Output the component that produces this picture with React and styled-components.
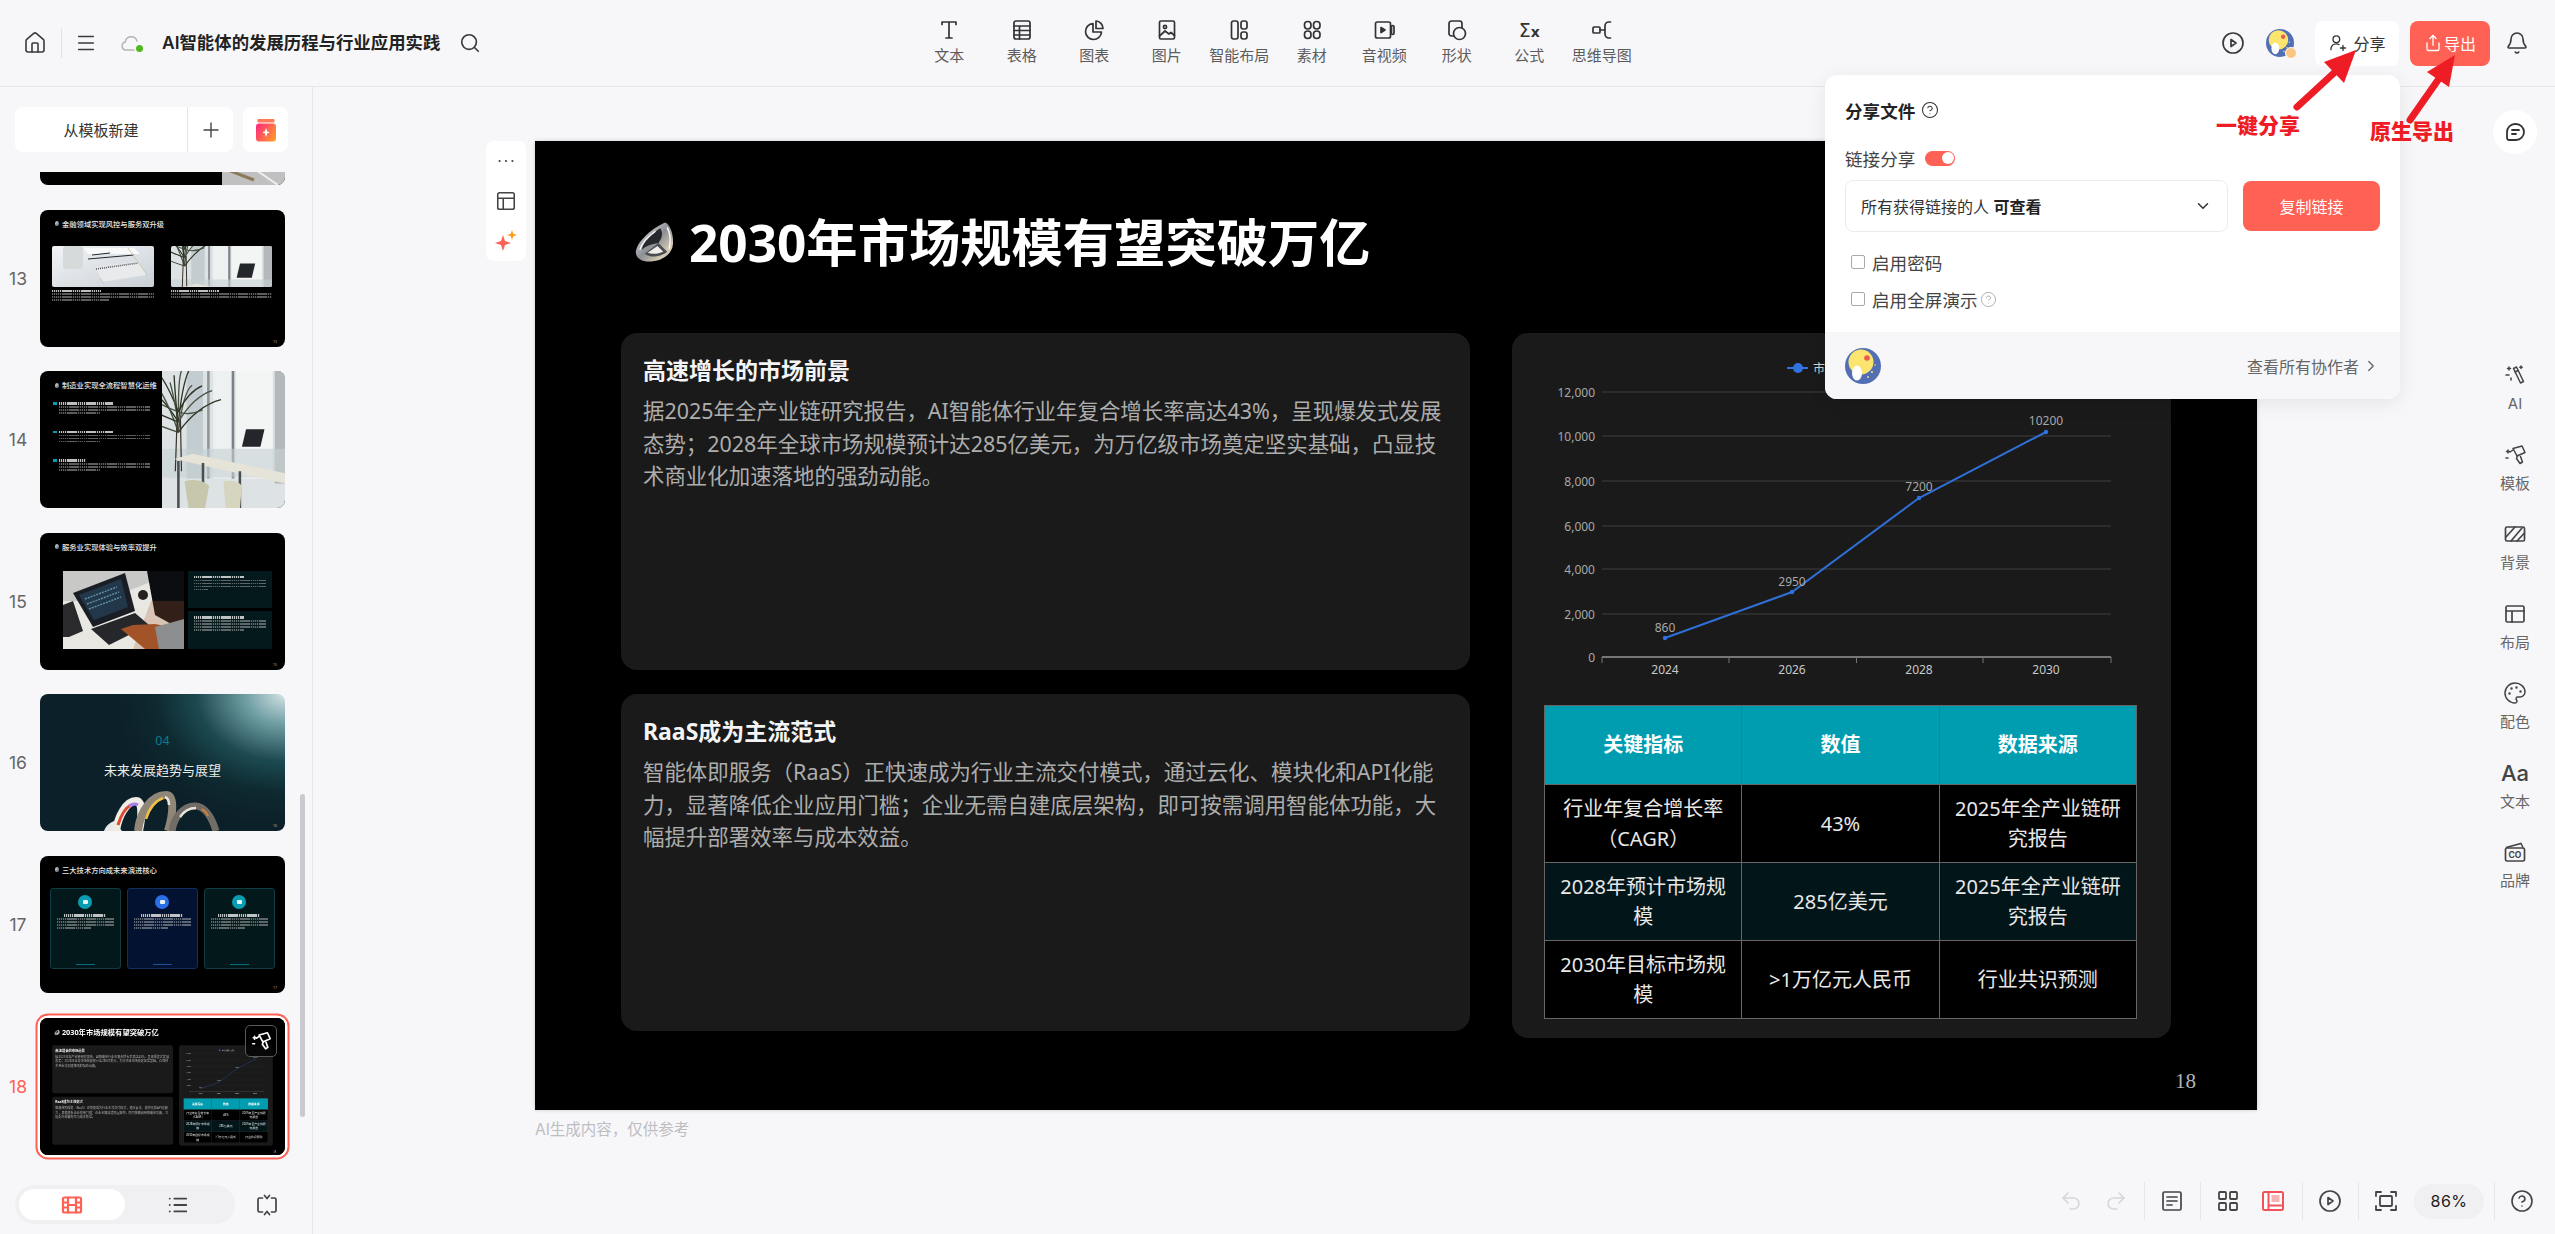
import React from 'react'
import styled, { createGlobalStyle } from 'styled-components'
import {
  Bell,
  ChevronDown,
  ChevronRight,
  CircleHelp,
  House,
  LayoutGrid,
  List,
  Menu,
  Palette,
  Plus,
  Redo2,
  Search,
  Share,
  Undo2,
} from 'lucide-react'

const CORAL = '#ff6154'
const PAGE = '#f7f7fa'
const UI_FONT = `Inter, "Noto Sans CJK SC", sans-serif`
const SLIDE_FONT = `"Noto Sans", "Noto Sans CJK SC", sans-serif`

const GlobalStyle = createGlobalStyle`
  html, body {
    margin: 0;
    padding: 0;
    background: ${PAGE};
    font-family: ${UI_FONT};
    color: #222;
  }
  * { box-sizing: border-box; }
`

const Root = styled.div`
  position: relative;
  width: 2555px;
  height: 1234px;
  overflow: hidden;
  display: flex;
  flex-direction: column;
  background: ${PAGE};
`

/* ---------- icons ---------- */

const IconSvg = styled.svg`
  flex: none;
  display: block;
  fill: none;
  stroke: currentColor;
  stroke-width: ${({ $w }) => $w || 1.7};
  stroke-linecap: round;
  stroke-linejoin: round;
  color: ${({ $color }) => $color || 'inherit'};
`

const Icon = ({ size = 24, w, color, children }) => (
  <IconSvg viewBox="0 0 24 24" width={size} height={size} $w={w} $color={color}>
    {children}
  </IconSvg>
)

const PlayIcon = ({ size = 24 }) => (
  <Icon size={size}>
    <circle cx="12" cy="12" r="10" />
    <path d="M10 8.500l5 3.500-5 3.500z" />
  </Icon>
)

const Avatar = ({ size = 28 }) => (
  <svg viewBox="0 0 36 36" width={size} height={size} style={{ display: 'block', flex: 'none' }}>
    <circle cx="18" cy="18" r="18" fill="#536fb4" />
    <circle cx="16" cy="14" r="12.5" fill="#fbe56f" />
    <circle cx="22" cy="10" r="2.8" fill="#ea5a4e" />
    <ellipse cx="12" cy="25" rx="5" ry="7.5" fill="#fff" />
    <circle cx="27" cy="24" r="1" fill="#fbe56f" />
    <circle cx="23" cy="29" r="0.9" fill="#fbe56f" />
    <circle cx="30" cy="17" r="0.8" fill="#fbe56f" />
  </svg>
)

const RollerIcon = ({ size = 24, w }) => (
  <Icon size={size} w={w}>
    <path d="M10 5.500l9-2.500 3 6.500-8 3.500z" />
    <path d="M14.500 12.500l-1 3 3.500 5 2.500-1.500-2-5.500" />
    <path d="M10 7l-3 2" />
    <path d="M5 7v3M3.500 8.500h3M3 15h2" />
  </Icon>
)

const GemIcon = () => (
  <svg viewBox="0 0 40 42" width="100%" height="100%" style={{ display: 'block' }}>
    <defs>
      <linearGradient id="gem" x1="0" y1="0" x2="1" y2="1">
        <stop offset="0" stopColor="#eef2f3" />
        <stop offset="0.5" stopColor="#8c8f94" />
        <stop offset="0.8" stopColor="#d9cdb4" />
        <stop offset="1" stopColor="#2f6aa0" />
      </linearGradient>
    </defs>
    <path d="M31 1C19 6 3 19 1 30c-1 7 5 11 13 11 12 0 24-6 25-18C39.500 13 36 3 31 1z" fill="url(#gem)" />
    <path d="M26 7C18 12 8 21 7 29c4-4 10-6 17-7 4-5 5-10 2-15z" fill="#26282c" />
    <path d="M10 33l14-11 9 9c-6 5-16 7-23 2z" fill="#4a4d52" />
    <path d="M33 6c3 6 4 14 2 22M5 29c2-7 9-14 16-19" stroke="#f8f8f8" strokeWidth="1.500" fill="none" />
    <path d="M13 32l10-7 6 6c-5 2-11 3-16 1z" fill="#f1efe8" />
  </svg>
)

/* ---------- top bar ---------- */

const TopBar = styled.header`
  flex: none;
  height: 87px;
  display: flex;
  align-items: center;
  border-bottom: 1px solid #e6e6eb;
`

const TopLeft = styled.div`
  flex: none;
  width: 913px;
  padding-left: 23px;
  display: flex;
  align-items: center;
  color: #3a3a3a;
`

const TopDivider = styled.span`
  width: 1px;
  height: 30px;
  background: #e2e2e6;
  margin: 0 13px 0 14px;
`

const CloudBox = styled.span`
  position: relative;
  margin: 0 19px 0 22px;
  color: #b5b5b5;
  &::after {
    content: '';
    position: absolute;
    right: 0;
    bottom: 3px;
    width: 7px;
    height: 7px;
    border-radius: 50%;
    background: #52b81f;
  }
`

const DocTitle = styled.h1`
  margin: 0 19px 0 0;
  font-size: 17.4px;
  line-height: 24px;
  font-weight: 600;
  color: #222;
  white-space: nowrap;
`

const ToolStrip = styled.nav`
  flex: none;
  display: flex;
  margin-top: -3px;
`

const ToolItem = styled.div`
  width: 72.5px;
  display: flex;
  flex-direction: column;
  align-items: center;
  gap: 4px;
  color: #333;
`

const ToolLabel = styled.span`
  font-size: 15px;
  line-height: 20px;
  color: #5c5c5c;
  white-space: nowrap;
`

const SigmaGlyph = styled.span`
  height: 24px;
  line-height: 24px;
  font-family: "DejaVu Sans", sans-serif;
  font-size: 19px;
  font-weight: 500;
  color: #333;
  small { font-size: 14px; font-weight: 700; }
`

const TopRight = styled.div`
  margin-left: auto;
  padding-right: 26px;
  display: flex;
  align-items: center;
  color: #3a3a3a;
`

const AvatarBadge = styled.span`
  position: relative;
  margin: 0 21px;
  &::after {
    content: '';
    position: absolute;
    right: -3px;
    bottom: -2px;
    width: 10px;
    height: 10px;
    border-radius: 50%;
    background: #fbc584;
    border: 1px solid #fff;
  }
`

const TopButton = styled.button`
  height: 45px;
  width: ${({ $wide }) => ($wide ? 84 : 80)}px;
  margin-right: ${({ $wide }) => ($wide ? 11 : 15)}px;
  border: none;
  border-radius: 8px;
  display: flex;
  align-items: center;
  justify-content: center;
  gap: ${({ $primary }) => ($primary ? 2 : 5)}px;
  font-family: inherit;
  font-size: 16px;
  background: ${({ $primary }) => ($primary ? CORAL : '#fff')};
  color: ${({ $primary }) => ($primary ? '#fff' : '#333')};
`

const topTools = [
  ['文本', <Icon key="t"><path d="M5 6.500V4h14v2.500M12 4v16M9 20h6" /></Icon>],
  ['表格', <Icon key="t"><rect x="4" y="3" width="16" height="18" rx="2" /><path d="M4 8h16M4 12.500h16M4 17h16M9.500 8v13" /></Icon>],
  ['图表', <Icon key="t"><path d="M11 5.500a8 8 0 1 0 8.500 8.500H11z" /><path d="M14 3v7.500h7A7.500 7.500 0 0 0 14 3z" /></Icon>],
  ['图片', <Icon key="t"><rect x="4.500" y="3" width="15" height="18" rx="1.500" /><circle cx="10" cy="9" r="1.600" /><path d="M4.500 18l5.500-5 4 3 2-1.500 3.500 3" /></Icon>],
  ['智能布局', <Icon key="t"><rect x="4.500" y="3" width="6.500" height="18" rx="2.200" /><rect x="14" y="3" width="6" height="8" rx="2.200" /><rect x="14" y="14" width="6" height="7" rx="2.200" /></Icon>],
  ['素材', <Icon key="t"><rect x="4.500" y="3.500" width="6.500" height="7.500" rx="3.200" /><rect x="13.500" y="3.500" width="6.500" height="7.500" rx="3.200" /><rect x="4.500" y="13" width="6.500" height="7.500" rx="3.200" /><rect x="13.500" y="13" width="6.500" height="7.500" rx="3.200" /></Icon>],
  ['音视频', <Icon key="t"><rect x="3.500" y="4" width="15" height="16" rx="1.800" /><path d="M9 9.500l4 2.500-4 2.500z" fill="currentColor" /><rect x="19.500" y="7.500" width="2.500" height="9" rx="1.200" /></Icon>],
  ['形状', <Icon key="t"><rect x="4" y="3" width="13" height="15" rx="2.500" /><circle cx="14.500" cy="15.500" r="6" fill={PAGE} /></Icon>],
  ['公式', <SigmaGlyph key="t">Σ<small>x</small></SigmaGlyph>],
  ['思维导图', <Icon key="t"><rect x="3" y="9" width="7" height="6" rx="1" /><path d="M10 12h5M20.500 4H19a4 4 0 0 0-4 4v8a4 4 0 0 0 4 4h1.500" /></Icon>],
]

const Header = () => (
  <TopBar>
    <TopLeft>
      <House size={24} strokeWidth={1.6} />
      <TopDivider />
      <Menu size={22} strokeWidth={1.6} />
      <CloudBox>
        <Icon size={24} w={1.5}>
          <path d="M15 19H7a4 4 0 0 1-.7-7.900A6 6 0 0 1 18 10" />
        </Icon>
      </CloudBox>
      <DocTitle>AI智能体的发展历程与行业应用实践</DocTitle>
      <Search size={22} strokeWidth={1.8} />
    </TopLeft>
    <ToolStrip>
      {topTools.map(([label, icon]) => (
        <ToolItem key={label}>
          {icon}
          <ToolLabel>{label}</ToolLabel>
        </ToolItem>
      ))}
    </ToolStrip>
    <TopRight>
      <PlayIcon />
      <AvatarBadge><Avatar /></AvatarBadge>
      <TopButton $wide>
        <Icon size={20} w={1.6}>
          <circle cx="10" cy="7.500" r="4" />
          <path d="M3.500 20c0-4.500 3-7 6.500-7 1.200 0 2.300.3 3.200.8M18 15v6M15 18h6" />
        </Icon>
        分享
      </TopButton>
      <TopButton $primary>
        <Share size={18} strokeWidth={1.8} />
        导出
      </TopButton>
      <Bell size={24} strokeWidth={1.6} />
    </TopRight>
  </TopBar>
)

/* ---------- sidebar ---------- */

const Body = styled.div`
  flex: 1;
  min-height: 0;
  display: flex;
`

const Sidebar = styled.aside`
  flex: none;
  width: 313px;
  border-right: 1px solid #e6e6eb;
  display: flex;
  flex-direction: column;
`

const NewRow = styled.div`
  flex: none;
  display: flex;
  gap: 10px;
  padding: 20px 0 20px 15px;
`

const NewButton = styled.div`
  width: 218px;
  height: 45px;
  background: #fff;
  border-radius: 8px;
  display: grid;
  grid-template-columns: 172px 1px 1fr;
  align-items: center;
  justify-items: center;
  font-size: 15px;
  color: #333;
`

const NewSplit = styled.span`
  width: 1px;
  height: 45px;
  background: #e4e4e8;
`

const JarButton = styled.div`
  width: 45px;
  height: 45px;
  background: #fff;
  border-radius: 8px;
  display: flex;
  align-items: center;
  justify-content: center;
`

const ThumbViewport = styled.div`
  position: relative;
  flex: 1;
  min-height: 0;
  overflow: hidden;
`

const ThumbList = styled.div`
  margin-top: -124px;
  display: flex;
  flex-direction: column;
  gap: 24.6px;
`

const ThumbRow = styled.div`
  display: flex;
  align-items: center;
`

const ThumbNo = styled.span`
  flex: none;
  width: 36px;
  margin-right: 4px;
  text-align: center;
  font-size: 17.5px;
  color: ${({ $active }) => ($active ? CORAL : '#666')};
`

const ThumbFrame = styled.div`
  flex: none;
  position: relative;
  width: 245px;
  height: 137px;
  border-radius: 8px;
  box-shadow: ${({ $active }) => ($active ? `0 0 0 2.5px #fff, 0 0 0 4.5px ${CORAL}` : 'none')};
`

const ThumbCard = styled.div`
  position: relative;
  width: 100%;
  height: 100%;
  overflow: hidden;
  border-radius: 8px;
  background: ${({ $bg }) => $bg || '#000'};
  color: #fff;
  font-family: ${SLIDE_FONT};
`

const ThumbPage = styled.span`
  position: absolute;
  right: 8px;
  bottom: 3px;
  font-size: 3.5px;
  color: #aaa;
`

const ThumbHead = styled.div`
  display: flex;
  align-items: center;
  gap: 3px;
  height: 10px;
  margin: ${({ $m }) => $m || '9px 0 0 15px'};
  font-size: 7.3px;
  line-height: 10px;
  font-weight: 500;
  white-space: nowrap;
  color: #e8e8e8;
  &::before {
    content: '';
    width: 4px;
    height: 5px;
    border-radius: 50% 50% 40% 40%;
    background: linear-gradient(135deg, #eee, #456);
  }
`

const Bars = styled.div`
  display: flex;
  flex-direction: column;
  gap: ${({ $gap }) => $gap || 1.3}px;
  margin-top: ${({ $top }) => $top || 0}px;
`

/* unreadable small copy in the thumbnails: a speckled line reads like tiny text */
const Bar = styled.i`
  display: block;
  height: ${({ $h }) => $h || 1.7}px;
  width: ${({ $pct }) => $pct || 100}%;
  opacity: ${({ $strong }) => ($strong ? 0.85 : 0.55)};
  filter: blur(0.3px);
  background: repeating-linear-gradient(
    90deg,
    ${({ $strong }) => ($strong ? '#e0e0e0' : '#a8a8a8')} 0 1.4px,
    rgba(120, 120, 120, 0.35) 1.4px 1.9px
  );
`

const PhotoBox = styled.div`
  overflow: hidden;
  border-radius: ${({ $r }) => $r ?? 2}px;
  width: ${({ $wd }) => ($wd ? `${$wd}px` : '100%')};
  height: ${({ $ht }) => ($ht ? `${$ht}px` : '100%')};
  flex: none;
  svg { display: block; width: 100%; height: 100%; }
`

const LEAVES = [-78, -62, -48, -34, -20, -8, 6, 20, 34, 50, 66, 82, 100, -96, -112]

const OfficePhoto = ({ crop = '0 0 120 134' }) => (
  <svg viewBox={crop} preserveAspectRatio="xMidYMid slice">
    <rect width="120" height="134" fill="#dde3e5" />
    <rect x="24" y="0" width="16" height="105" fill="#c3ccd0" />
    <rect x="50" y="0" width="18" height="105" fill="#eef1f1" />
    <rect x="72" y="0" width="36" height="105" fill="#f3f4f4" />
    <rect x="68" y="0" width="2.500" height="105" fill="#7b8186" />
    <rect x="110" y="0" width="10" height="110" fill="#b4b8ba" />
    <rect x="44" y="0" width="2.500" height="105" fill="#8d9598" />
    <path d="M0 76h120v28H0z" fill="#c7d0d4" opacity="0.6" />
    {LEAVES.map((a, i) => {
      const len = 24 + (i % 4) * 6
      const rad = (a * Math.PI) / 180
      const x = 16 + Math.sin(rad) * len
      const y = 34 - Math.cos(rad) * len
      return (
        <path
          key={a}
          d={`M16 ${40 + (i % 3) * 10}Q${(16 + x) / 2 - 2} ${y + 6} ${x} ${y}`}
          stroke={i % 2 ? '#2c3526' : '#475240'}
          strokeWidth="1.300"
          fill="none"
        />
      )
    })}
    <path d="M15 40l-2 58M18 48l1 50" stroke="#3a3328" strokeWidth="1.200" />
    <path d="M82 57h18l-4 17H78z" fill="#23262b" />
    <path d="M12 86l108 24v-10L30 81z" fill="#e6e3d8" />
    <path d="M40 90v44M76 98v36M16 88v46" stroke="#4b4f50" strokeWidth="2.500" />
    <path d="M22 108c10-3 18-1 24 4l-4 22H26z" fill="#c6c7ac" />
    <path d="M60 108c8-2 14 0 18 4l-2 22H62z" fill="#d6d6c0" />
  </svg>
)

const DeskPhoto = () => (
  <svg viewBox="0 0 102 41" preserveAspectRatio="xMidYMid slice">
    <defs>
      <linearGradient id="desk" x1="0" y1="0" x2="1" y2="1">
        <stop offset="0" stopColor="#f2f4f6" />
        <stop offset="1" stopColor="#c9d0d6" />
      </linearGradient>
    </defs>
    <rect width="102" height="41" fill="url(#desk)" />
    <rect x="11" y="0" width="20" height="23" rx="3" fill="#d7dadb" />
    <path d="M32 2h50l6 6H36z" fill="#f9f9f9" />
    <path d="M36 13l46-4M40 9l18-2" stroke="#22252a" strokeWidth="1" />
    <path d="M44 21l42-6 8 14-44 7z" fill="#e8eaec" />
    <path d="M44 23l42-6" stroke="#55585c" strokeWidth="1.600" strokeDasharray="1 1" />
    <path d="M76 2l20 28M48 32l4 6" stroke="#d0c9b0" strokeWidth="1" />
  </svg>
)

const PenStub = () => (
  <svg viewBox="0 0 63 137" preserveAspectRatio="none">
    <rect width="63" height="137" fill="#bfc0bf" />
    <path d="M6 122l26 10" stroke="#8a7a5a" strokeWidth="3" />
    <path d="M34 122l22 15" stroke="#eeeeee" strokeWidth="2" />
  </svg>
)

const LaptopPhoto = () => (
  <svg viewBox="0 0 121 78" preserveAspectRatio="xMidYMid slice">
    <rect width="121" height="78" fill="#e9e7e2" />
    <path d="M0 0h90v10L40 30 0 30z" fill="#c8c8c6" />
    <path d="M84 0h37v60L92 44z" fill="#0b0d10" />
    <path d="M88 30h33v48H70z" fill="#a8562a" opacity="0.25" />
    <path d="M10 22l52-20 10 38-42 16z" fill="#1a1e24" />
    <path d="M16 24l42-16 7 28-34 13z" fill="#22384a" />
    <path d="M22 28l32-12M24 33l32-12M26 38l32-12" stroke="#5f8da0" strokeWidth="1.500" strokeDasharray="2 1" />
    <path d="M28 58l44-16 14 12-40 20z" fill="#26272a" />
    <path d="M82 78l-24-20 12-4 22-1 29 6v19z" fill="#a25428" />
    <path d="M92 56l29-8v30H96z" fill="#8b8d8e" />
    <circle cx="80" cy="24" r="5" fill="#24211f" />
    <path d="M0 34l10-4 10 30-14 6H0z" fill="#2a2a2c" />
  </svg>
)

const RingsArt = () => (
  <svg viewBox="0 0 118 42" width="118" height="42" fill="none" style={{ display: 'block' }}>
    <path d="M2 42c2-6 6-8 10-10l8 10z" fill="#e8e8e6" />
    <path d="M14 42c2-14 10-30 20-30 7 0 6 16 3 30" stroke="#efece6" strokeWidth="8" />
    <path d="M16 36c3-10 7-17 13-20" stroke="#df4a2f" strokeWidth="3" />
    <path d="M27 17c3-2 6-3 9-1" stroke="#a97fe8" strokeWidth="3" />
    <path d="M36 42c2-20 14-36 28-36 9 0 7 20 2 36" stroke="#8f8678" strokeWidth="8" />
    <path d="M44 30c3-10 9-18 17-21" stroke="#f0c145" strokeWidth="2.500" />
    <path d="M63 8c3 1 4 4 4 8" stroke="#e9e6df" strokeWidth="2.500" />
    <path d="M70 42c2-14 12-26 24-25 10 1 16 12 20 25" stroke="#716d66" strokeWidth="7" />
    <path d="M78 28c4-6 10-9 16-9" stroke="#e6e2da" strokeWidth="2.500" />
    <path d="M100 20c3 2 5 4 6 7" stroke="#d2803a" strokeWidth="2" />
  </svg>
)

const Photos13 = styled.div`
  display: grid;
  grid-template-columns: 102px 101px;
  column-gap: 17px;
  margin: 17px 0 0 12px;
`

const PhotoCol = styled.div`
  display: flex;
  flex-direction: column;
`

const Split14 = styled.div`
  display: flex;
  justify-content: flex-end;
  height: 100%;
`

const Left14 = styled.div`
  width: 122px;
  flex: none;
`

const Bullets14 = styled.div`
  display: flex;
  flex-direction: column;
  gap: 17px;
  margin: 12px 12px 0 13px;
`

const Bullet14 = styled.div`
  position: relative;
  padding-left: 5.5px;
  &::before {
    content: '';
    position: absolute;
    left: 0;
    top: 0;
    width: 4px;
    height: 2.5px;
    background: #0a9cb0;
  }
`

const Body15 = styled.div`
  display: flex;
  gap: 4px;
  margin: 19px 0 0 23px;
`

const Boxes15 = styled.div`
  width: 84px;
  display: flex;
  flex-direction: column;
  gap: 3px;
`

const Box15 = styled.div`
  flex: 1;
  background: #03191c;
  padding: 5px 6px;
`

const Center16 = styled.div`
  display: flex;
  flex-direction: column;
  align-items: center;
  padding-top: 39px;
`

const No16 = styled.span`
  font-size: 12.5px;
  line-height: 16px;
  color: #0a7c8c;
`

const Title16 = styled.span`
  margin-top: 12px;
  font-size: 13px;
  line-height: 18px;
  color: #ececec;
  white-space: nowrap;
`

const Rings16 = styled.div`
  position: absolute;
  left: 62px;
  bottom: 0;
`

const Cards17 = styled.div`
  display: grid;
  grid-template-columns: repeat(3, 70.5px);
  column-gap: 6.5px;
  margin: 13px 0 0 10px;
`

const Card17 = styled.div`
  height: 81px;
  border-radius: 3px;
  padding: 6px 6px 0;
  display: flex;
  flex-direction: column;
  align-items: center;
  background: ${({ $blue }) => ($blue ? '#031230' : '#03181b')};
  border: 0.5px solid ${({ $blue }) => ($blue ? '#10305f' : '#0e3d44')};
`

const Dot17 = styled.span`
  flex: none;
  width: 14px;
  height: 14px;
  border-radius: 50%;
  background: ${({ $blue }) => ($blue ? '#2a6fe8' : '#0a9cb0')};
  display: flex;
  align-items: center;
  justify-content: center;
  &::after {
    content: '';
    width: 5px;
    height: 4px;
    border-radius: 1px;
    background: #e4f3f5;
  }
`

const Line17 = styled.span`
  margin-top: auto;
  margin-bottom: 3px;
  width: 19px;
  height: 1.2px;
  background: ${({ $blue }) => ($blue ? '#1d4e9c' : '#0a6e7c')};
`

const MiniSlide = styled.div`
  position: absolute;
  left: 0;
  top: 0;
  transform: scale(0.1423);
  transform-origin: top left;
`

const RollerBadge = styled.div`
  position: absolute;
  top: 7.5px;
  right: 8px;
  width: 32px;
  height: 32px;
  border-radius: 5px;
  background: rgba(0, 0, 0, 0.72);
  border: 1px solid #5a5a5a;
  color: #fff;
  display: flex;
  align-items: center;
  justify-content: center;
`

const Slide12 = () => (
  <ThumbCard>
    <Split14>
      <PhotoBox $r={0} $wd={63}><PenStub /></PhotoBox>
    </Split14>
  </ThumbCard>
)

const Slide13 = () => (
  <ThumbCard>
    <ThumbHead>金融领域实现风控与服务双升级</ThumbHead>
    <Photos13>
      {[0.8, 1].map((v, i) => (
        <PhotoCol key={v}>
          <PhotoBox $ht={41}>{i === 0 ? <DeskPhoto /> : <OfficePhoto crop="0 36 120 49" />}</PhotoBox>
          <Bars $top={3}>
            <Bar $h={2.6} $pct={48} $strong />
            <Bar />
            <Bar />
            {i === 0 && <Bar $pct={56} />}
          </Bars>
        </PhotoCol>
      ))}
    </Photos13>
    <ThumbPage>13</ThumbPage>
  </ThumbCard>
)

const Slide14 = () => (
  <ThumbCard>
    <Split14>
      <Left14>
        <ThumbHead>制造业实现全流程智慧化运维</ThumbHead>
        <Bullets14>
          {[0, 1, 2].map(i => (
            <Bullet14 key={i}>
              <Bars>
                <Bar $h={2.6} $pct={i === 2 ? 30 : 60} $strong />
                <Bar />
                <Bar />
                <Bar $pct={45} />
              </Bars>
            </Bullet14>
          ))}
        </Bullets14>
      </Left14>
      <PhotoBox $r={0} $wd={123}><OfficePhoto /></PhotoBox>
    </Split14>
  </ThumbCard>
)

const Slide15 = () => (
  <ThumbCard>
    <ThumbHead>服务业实现体验与效率双提升</ThumbHead>
    <Body15>
      <PhotoBox $r={0} $wd={121} $ht={78}><LaptopPhoto /></PhotoBox>
      <Boxes15>
        {[0, 1].map(i => (
          <Box15 key={i}>
            <Bars>
              <Bar $h={2.6} $pct={70} $strong />
              <Bar />
              <Bar />
              <Bar />
              <Bar $pct={i ? 70 : 20} />
            </Bars>
          </Box15>
        ))}
      </Boxes15>
    </Body15>
    <ThumbPage>15</ThumbPage>
  </ThumbCard>
)

const Slide16 = () => (
  <ThumbCard $bg="radial-gradient(170px 130px at 100% 0%, #d3e4e6 0%, #6d9ca1 24%, #1c4950 52%, #0e2930 76%, #0c2029 100%)">
    <Center16>
      <No16>04</No16>
      <Title16>未来发展趋势与展望</Title16>
    </Center16>
    <Rings16><RingsArt /></Rings16>
    <ThumbPage>16</ThumbPage>
  </ThumbCard>
)

const Slide17 = () => (
  <ThumbCard>
    <ThumbHead>三大技术方向成未来演进核心</ThumbHead>
    <Cards17>
      {[false, true, false].map((blue, i) => (
        <Card17 key={i} $blue={blue}>
          <Dot17 $blue={blue} />
          <Bars $top={5} style={{ width: '100%' }}>
            <Bar $h={2.6} $pct={74} $strong style={{ alignSelf: 'center' }} />
            <Bar />
            <Bar />
            <Bar />
            <Bar $pct={60} />
          </Bars>
          <Line17 $blue={blue} />
        </Card17>
      ))}
    </Cards17>
    <ThumbPage>17</ThumbPage>
  </ThumbCard>
)

const Thumbs = () => (
  <ThumbViewport>
    <ThumbList>
      <ThumbRow><ThumbNo /><ThumbFrame><Slide12 /></ThumbFrame></ThumbRow>
      <ThumbRow><ThumbNo>13</ThumbNo><ThumbFrame><Slide13 /></ThumbFrame></ThumbRow>
      <ThumbRow><ThumbNo>14</ThumbNo><ThumbFrame><Slide14 /></ThumbFrame></ThumbRow>
      <ThumbRow><ThumbNo>15</ThumbNo><ThumbFrame><Slide15 /></ThumbFrame></ThumbRow>
      <ThumbRow><ThumbNo>16</ThumbNo><ThumbFrame><Slide16 /></ThumbFrame></ThumbRow>
      <ThumbRow><ThumbNo>17</ThumbNo><ThumbFrame><Slide17 /></ThumbFrame></ThumbRow>
      <ThumbRow>
        <ThumbNo $active>18</ThumbNo>
        <ThumbFrame $active>
          <ThumbCard>
            <MiniSlide><SlideCanvas /></MiniSlide>
          </ThumbCard>
          <RollerBadge><RollerIcon size={22} w={1.8} /></RollerBadge>
        </ThumbFrame>
      </ThumbRow>
    </ThumbList>
    <ScrollThumb />
  </ThumbViewport>
)

const ScrollThumb = styled.span`
  position: absolute;
  left: 300px;
  top: 622px;
  width: 5px;
  height: 323px;
  border-radius: 3px;
  background: #c9cacf;
`

const TabRow = styled.div`
  flex: none;
  display: flex;
  align-items: center;
  padding: 0 0 10px 15px;
  margin-top: 15px;
`

const TabPill = styled.div`
  width: 220px;
  height: 39px;
  padding: 4px;
  border-radius: 20px;
  background: #f0f0f3;
  display: grid;
  grid-template-columns: 106px 1fr;
`

const Tab = styled.span`
  border-radius: 16px;
  display: flex;
  align-items: center;
  justify-content: center;
  background: ${({ $active }) => ($active ? '#fff' : 'transparent')};
  color: ${({ $active }) => ($active ? CORAL : '#444')};
`

const TabExtra = styled.span`
  margin-left: 20px;
  color: #444;
`

const Side = () => (
  <Sidebar>
    <NewRow>
      <NewButton>
        从模板新建
        <NewSplit />
        <Plus size={24} strokeWidth={1.4} color="#444" />
      </NewButton>
      <JarButton>
        <svg viewBox="0 0 24 24" width="24" height="24">
          <defs>
            <linearGradient id="jar" x1="0" y1="0.2" x2="1" y2="0.8">
              <stop offset="0" stopColor="#ff2f7a" />
              <stop offset="1" stopColor="#ff9a2b" />
            </linearGradient>
          </defs>
          <rect x="3.500" y="1" width="17" height="3.500" rx="1" fill="#ff7a5a" />
          <rect x="2" y="5.500" width="20" height="18" rx="3" fill="url(#jar)" />
          <path d="M12 10l1.600 4.400L12 19l-1.600-4.600z" fill="#fff" />
          <path d="M9 14.400h6" stroke="#fff" strokeWidth="1.200" />
        </svg>
      </JarButton>
    </NewRow>
    <Thumbs />
    <TabRow>
      <TabPill>
        <Tab $active>
          <Icon size={24} w={2.2}>
            <rect x="3" y="4.500" width="18" height="15" rx="1.500" />
            <path d="M8 4.500v15M16 4.500v15M3 9.500h5M3 14.500h5M16 9.500h5M16 14.500h5M8 12h8" />
          </Icon>
        </Tab>
        <Tab><List size={22} strokeWidth={2} /></Tab>
      </TabPill>
      <TabExtra>
        <Icon size={24} w={1.7}>
          <path d="M7.500 5H4.500A1.500 1.500 0 0 0 3 6.500v11A1.500 1.500 0 0 0 4.500 19h3M16.500 5h3A1.500 1.500 0 0 1 21 6.500v11a1.500 1.500 0 0 1-1.500 1.500h-3" />
          <path d="M9.500 2.500l2.500 3 2.500-3M9.500 21.500l2.500-3 2.500 3" />
        </Icon>
      </TabExtra>
    </TabRow>
  </Sidebar>
)

/* ---------- slide ---------- */

const SlideBox = styled.section`
  position: relative;
  flex: none;
  width: 1722px;
  height: 969px;
  padding: 70px 86px 0;
  background: #000;
  color: #fff;
  font-family: ${SLIDE_FONT};
  box-shadow: 0 0 4px rgba(0, 0, 0, 0.18);
`

const SlideHead = styled.div`
  display: flex;
  align-items: center;
  height: 62px;
  padding-left: 14px;
  gap: 15px;
  margin-bottom: 60px;
`

const GemBox = styled.span`
  flex: none;
  width: 39px;
  height: 42px;
`

const SlideTitle = styled.h2`
  margin: 0;
  font-size: 51.3px;
  line-height: 62px;
  font-weight: 700;
  white-space: nowrap;
`

const SlideGrid = styled.div`
  display: grid;
  grid-template-columns: 849px 659px;
  column-gap: 42px;
  height: 705px;
`

const LeftCol = styled.div`
  display: flex;
  flex-direction: column;
  gap: 24px;
  padding-bottom: 7px;
`

const TextCard = styled.article`
  flex: 1;
  border-radius: 16px;
  background: #1a1a1a;
  padding: 20px 22px 0;
`

const CardTitle = styled.h3`
  margin: 0 0 8px;
  font-size: 23px;
  line-height: 34px;
  font-weight: 700;
  color: #f4f4f4;
`

const CardText = styled.p`
  margin: 0;
  font-size: 21.45px;
  line-height: 32.5px;
  color: #adadad;
  white-space: nowrap;
`

const RightPanel = styled.div`
  border-radius: 16px;
  background: #1a1a1a;
  overflow: hidden;
`

const ChartSvg = styled.svg`
  display: block;
  width: 659px;
  height: 372px;
  font-family: ${SLIDE_FONT};
  font-size: 12px;
  fill: #a8a8a8;
`

const DataTable = styled.table`
  width: 593px;
  margin-left: 32px;
  table-layout: fixed;
  border-collapse: collapse;
  font-size: 20px;
  line-height: 30px;
  color: #e8e8e8;
  th, td {
    border: 1px solid #666;
    padding: 0 14px;
    text-align: center;
    font-weight: 400;
  }
  th {
    height: 79px;
    background: #009cb0;
    color: #fff;
    font-weight: 700;
  }
  td { height: 78px; background: #000; }
  tr:nth-child(2) td { background: #02161a; }
`

const PageNo = styled.span`
  position: absolute;
  right: 61px;
  bottom: 17px;
  font-family: "Liberation Serif", serif;
  font-size: 21px;
  line-height: 24px;
  color: #b5b5b5;
`

const grid = [
  ['12,000', 59],
  ['10,000', 103],
  ['8,000', 148],
  ['6,000', 193],
  ['4,000', 236],
  ['2,000', 281],
  ['0', 324],
]

const points = [
  { year: '2024', value: '860', x: 153, y: 305, ly: 294 },
  { year: '2026', value: '2950', x: 280, y: 259, ly: 248 },
  { year: '2028', value: '7200', x: 407, y: 165, ly: 153 },
  { year: '2030', value: '10200', x: 534, y: 99, ly: 87 },
]

const MarketChart = () => (
  <ChartSvg viewBox="0 0 659 372">
    <path d="M275 35h21" stroke="#2f73e0" strokeWidth="2" />
    <circle cx="286" cy="35" r="5" fill="#2f73e0" />
    <text x="301" y="39.5" fill="#d0d0d0">市场规模（亿元）</text>
    {grid.map(([label, y]) => (
      <g key={label}>
        <line x1="90" x2="599" y1={y} y2={y} stroke={y === 324 ? '#777' : '#333'} strokeWidth={y === 324 ? 2 : 1.5} />
        <text x="83" y={y + 4.5} textAnchor="end">{label}</text>
      </g>
    ))}
    {[90, 217, 344.5, 471, 599].map(x => (
      <line key={x} x1={x} x2={x} y1="324" y2="330" stroke="#777" />
    ))}
    <polyline
      points={points.map(p => `${p.x},${p.y}`).join(' ')}
      fill="none"
      stroke="#2f6fd6"
      strokeWidth="2"
    />
    {points.map(p => (
      <g key={p.year}>
        <circle cx={p.x} cy={p.y} r="2.2" fill="#2f73e0" />
        <text x={p.x} y={p.ly + 4.5} textAnchor="middle">{p.value}</text>
        <text x={p.x} y="341" textAnchor="middle" fill="#c8c8c8">{p.year}</text>
      </g>
    ))}
  </ChartSvg>
)

function SlideCanvas() {
  return (
    <SlideBox>
      <SlideHead>
        <GemBox><GemIcon /></GemBox>
        <SlideTitle>2030年市场规模有望突破万亿</SlideTitle>
      </SlideHead>
      <SlideGrid>
        <LeftCol>
          <TextCard>
            <CardTitle>高速增长的市场前景</CardTitle>
            <CardText>
              据2025年全产业链研究报告，AI智能体行业年复合增长率高达43%，呈现爆发式发展<br />
              态势；2028年全球市场规模预计达285亿美元，为万亿级市场奠定坚实基础，凸显技<br />
              术商业化加速落地的强劲动能。
            </CardText>
          </TextCard>
          <TextCard>
            <CardTitle>RaaS成为主流范式</CardTitle>
            <CardText>
              智能体即服务（RaaS）正快速成为行业主流交付模式，通过云化、模块化和API化能<br />
              力，显著降低企业应用门槛；企业无需自建底层架构，即可按需调用智能体功能，大<br />
              幅提升部署效率与成本效益。
            </CardText>
          </TextCard>
        </LeftCol>
        <RightPanel>
          <MarketChart />
          <DataTable>
            <thead>
              <tr><th>关键指标</th><th>数值</th><th>数据来源</th></tr>
            </thead>
            <tbody>
              <tr><td>行业年复合增长率（CAGR）</td><td>43%</td><td>2025年全产业链研究报告</td></tr>
              <tr><td>2028年预计市场规模</td><td>285亿美元</td><td>2025年全产业链研究报告</td></tr>
              <tr><td>2030年目标市场规模</td><td>&gt;1万亿元人民币</td><td>行业共识预测</td></tr>
            </tbody>
          </DataTable>
        </RightPanel>
      </SlideGrid>
      <PageNo>18</PageNo>
    </SlideBox>
  )
}

/* ---------- main area ---------- */

const Main = styled.main`
  flex: 1;
  min-width: 0;
  display: flex;
  flex-direction: column;
`

const WorkRow = styled.div`
  flex: 1;
  min-height: 0;
  display: flex;
`

const Stage = styled.div`
  flex: 1;
  min-width: 0;
  padding: 54px 0 0 173px;
  display: flex;
  gap: 9px;
  align-items: flex-start;
`

const SlideTools = styled.div`
  flex: none;
  width: 40px;
  height: 120px;
  border-radius: 8px;
  background: #fff;
  display: flex;
  flex-direction: column;
  align-items: center;
  justify-content: space-between;
  padding: 9px 0 8px;
  color: #444;
`

const SlideCol = styled.div`
  display: flex;
  flex-direction: column;
`

const AiHint = styled.span`
  margin-top: 10px;
  font-size: 15.5px;
  line-height: 20px;
  color: #bdbdc2;
`

const Rail = styled.aside`
  flex: none;
  width: 80px;
  padding-top: 23px;
  display: flex;
  flex-direction: column;
  align-items: center;
`

const ChatBubble = styled.span`
  width: 44px;
  height: 44px;
  border-radius: 50%;
  background: #fff;
  display: flex;
  align-items: center;
  justify-content: center;
  margin-bottom: 209px;
  color: #333;
`

const RailItem = styled.div`
  height: 79.5px;
  display: flex;
  flex-direction: column;
  align-items: center;
  gap: 7px;
  color: #444;
`

const RailLabel = styled.span`
  font-size: 15px;
  line-height: 20px;
  color: #666;
`

const AaGlyph = styled.span`
  height: 24px;
  line-height: 24px;
  font-size: 22px;
  font-weight: 500;
  color: #444;
`

const railTools = [
  ['AI', <Icon key="i" w={1.5}><path d="M10.500 5.500l3-1.500 7 14.500-3 1.500z" /><path d="M12 9l3-1.500M6 4v3M4.500 5.500h3M3 12h3M18 3v2.500M16.800 4.200h2.400M8 15v2" /></Icon>],
  ['模板', <RollerIcon key="i" w={1.5} />],
  ['背景', <Icon key="i" w={1.7}><rect x="2.500" y="5" width="19" height="14" rx="1.500" /><path d="M3 15L12 5M8 19L19 6M14 19l7.500-8" /></Icon>],
  ['布局', <Icon key="i" w={1.7}><rect x="3" y="4" width="18" height="16" rx="1.500" /><path d="M3 9h18M9 9v11" /></Icon>],
  ['配色', <Palette key="i" size={24} strokeWidth={1.5} />],
  ['文本', <AaGlyph key="i">Aa</AaGlyph>],
  ['品牌', (
    <svg key="i" viewBox="0 0 24 24" width="24" height="24" style={{ display: 'block' }}>
      <path d="M3 7.500L18 3.500l2 4" fill="none" stroke="#444" strokeWidth="1.500" />
      <rect x="2.500" y="8" width="19" height="13" rx="1.500" fill="none" stroke="#444" strokeWidth="1.700" />
      <text x="12" y="18" textAnchor="middle" fontSize="8.500" fontWeight="700" fontFamily="Inter, sans-serif" fill="#444">CO</text>
    </svg>
  )],
]

const BottomBar = styled.footer`
  flex: none;
  height: 66px;
  padding-right: 21px;
  display: flex;
  align-items: center;
  justify-content: flex-end;
  color: #444;
`

const BarGroup = styled.div`
  display: flex;
  align-items: center;
  gap: ${({ $gap }) => $gap || 0}px;
  padding: 0 ${({ $right }) => $right ?? 16}px 0 ${({ $left }) => $left ?? 16}px;
  height: 38px;
  border-left: ${({ $first }) => ($first ? 'none' : '1px solid #e6e6ea')};
`

const ZoomPill = styled.span`
  width: 70px;
  height: 35px;
  border-radius: 18px;
  background: #f0f0f3;
  display: flex;
  align-items: center;
  justify-content: center;
  font-size: 16px;
  letter-spacing: 0.5px;
  color: #222;
`

const Bottom = () => (
  <BottomBar>
    <BarGroup $first $gap={21}>
      <Undo2 size={24} strokeWidth={1.5} color="#d6d6da" />
      <Redo2 size={24} strokeWidth={1.5} color="#d6d6da" />
    </BarGroup>
    <BarGroup $left={15}>
      <Icon size={24} w={1.7}>
        <rect x="3" y="3" width="18" height="18" rx="1.500" />
        <path d="M7 8h10M7 12h10M7 16h5" />
      </Icon>
    </BarGroup>
    <BarGroup $gap={21} $left={15} $right={17}>
      <LayoutGrid size={24} strokeWidth={1.8} />
      <svg viewBox="0 0 24 24" width="24" height="24" style={{ display: 'block' }}>
        <rect x="2" y="3" width="20" height="18" rx="1.500" fill="#fff" stroke="#f4525a" strokeWidth="2" />
        <path d="M7.500 3v18M7.500 16.500H22" stroke="#f4525a" strokeWidth="2" fill="none" />
        <rect x="10.500" y="6" width="8" height="7" fill="#f8b4b4" />
      </svg>
    </BarGroup>
    <BarGroup $left={15}>
      <PlayIcon />
    </BarGroup>
    <BarGroup $left={15} $right={10} $gap={16}>
      <Icon size={24} w={1.8}>
        <path d="M2 7V3h5M17 3h5v4M22 17v4h-5M7 21H2v-4" />
        <rect x="6" y="7" width="12" height="10" rx="1" />
      </Icon>
      <ZoomPill>86%</ZoomPill>
    </BarGroup>
    <BarGroup $left={15} $right={0}>
      <CircleHelp size={24} strokeWidth={1.6} />
    </BarGroup>
  </BottomBar>
)

/* ---------- share popover ---------- */

const Popover = styled.div`
  position: absolute;
  left: 1825px;
  top: 75px;
  width: 575px;
  height: 324px;
  border-radius: 12px;
  overflow: hidden;
  background: #fff;
  box-shadow: 0 4px 20px rgba(0, 0, 0, 0.08);
  display: flex;
  flex-direction: column;
  z-index: 5;
`

const PopoverBody = styled.div`
  flex: 1;
  padding: 23px 20px 0;
`

const PopTitle = styled.div`
  display: flex;
  align-items: center;
  gap: 6px;
  height: 24px;
  font-size: 17.6px;
  font-weight: 700;
  color: #222;
`

const ToggleRow = styled.div`
  display: flex;
  align-items: center;
  gap: 10px;
  height: 24px;
  margin-top: 24px;
  font-size: 17.6px;
  color: #444;
`

const Toggle = styled.span`
  width: 30px;
  height: 15px;
  border-radius: 8px;
  background: ${CORAL};
  display: flex;
  justify-content: flex-end;
  padding: 1.5px;
  &::after {
    content: '';
    width: 12px;
    height: 12px;
    border-radius: 50%;
    background: #fff;
  }
`

const LinkRow = styled.div`
  display: flex;
  align-items: center;
  gap: 15px;
  margin-top: 10px;
  width: 535px;
`

const FakeSelect = styled.div`
  width: 383px;
  height: 52px;
  border: 1px solid #ebebef;
  border-radius: 8px;
  padding: 0 15px;
  display: flex;
  align-items: center;
  justify-content: space-between;
  font-size: 16px;
  color: #333;
  b { font-weight: 700; color: #222; }
`

const CopyButton = styled.button`
  width: 137px;
  height: 50px;
  border: none;
  border-radius: 8px;
  background: ${CORAL};
  color: #fff;
  font-family: inherit;
  font-size: 16px;
`

const CheckRow = styled.label`
  display: flex;
  align-items: center;
  gap: 7px;
  height: 24px;
  margin-top: ${({ $top }) => $top}px;
  padding-left: 6px;
  font-size: 17.6px;
  color: #444;
`

const CheckBox = styled.span`
  width: 14px;
  height: 14px;
  border: 1px solid #a9a9ad;
  border-radius: 2px;
  background: #fff;
`

const PopFooter = styled.div`
  flex: none;
  height: 67px;
  padding: 0 20px 0 20px;
  background: ${PAGE};
  display: flex;
  align-items: center;
  justify-content: space-between;
`

const AllLink = styled.span`
  display: flex;
  align-items: center;
  gap: 3px;
  font-size: 16px;
  color: #666;
`

const SharePopover = () => (
  <Popover>
    <PopoverBody>
      <PopTitle>
        分享文件
        <CircleHelp size={18} strokeWidth={1.4} color="#333" />
      </PopTitle>
      <ToggleRow>链接分享<Toggle /></ToggleRow>
      <LinkRow>
        <FakeSelect>
          <span>所有获得链接的人 <b>可查看</b></span>
          <ChevronDown size={18} strokeWidth={2} />
        </FakeSelect>
        <CopyButton>复制链接</CopyButton>
      </LinkRow>
      <CheckRow $top={18}><CheckBox />启用密码</CheckRow>
      <CheckRow $top={13}>
        <CheckBox />
        启用全屏演示
        <CircleHelp size={17} strokeWidth={1.3} color="#aaa" style={{ marginLeft: -5 }} />
      </CheckRow>
    </PopoverBody>
    <PopFooter>
      <Avatar size={36} />
      <AllLink>
        查看所有协作者
        <ChevronRight size={18} strokeWidth={1.8} />
      </AllLink>
    </PopFooter>
  </Popover>
)

/* ---------- red annotations laid over the screenshot ---------- */

const ArrowLayer = styled.svg`
  position: absolute;
  left: 2280px;
  top: 40px;
  width: 190px;
  height: 90px;
  overflow: visible;
  z-index: 6;
`

const Note = styled.span`
  position: absolute;
  left: ${({ $x }) => $x}px;
  top: ${({ $y }) => $y}px;
  font-size: 21px;
  line-height: 26px;
  font-weight: 900;
  color: #ee1c25;
  white-space: nowrap;
  z-index: 6;
`

const Annotations = () => (
  <>
    <ArrowLayer viewBox="0 0 190 90">
      <path d="M17 67L55 32" stroke="#ee1c25" strokeWidth="7" strokeLinecap="round" />
      <polygon points="76,10 44,22 64,43" fill="#ee1c25" />
      <path d="M130 80L158 40" stroke="#ee1c25" strokeWidth="7" strokeLinecap="round" />
      <polygon points="175,15 147,32 169,47" fill="#ee1c25" />
    </ArrowLayer>
    <Note $x={2216} $y={113}>一键分享</Note>
    <Note $x={2370} $y={119}>原生导出</Note>
  </>
)

export default function App() {
  return (
    <Root>
      <GlobalStyle />
      <Header />
      <Body>
        <Side />
        <Main>
          <WorkRow>
            <Stage>
              <SlideTools>
                <Icon size={22} w={2.4}><path d="M5 12h.01M12 12h.01M19 12h.01" /></Icon>
                <Icon size={22} w={1.7}>
                  <rect x="3" y="3" width="18" height="18" rx="2" />
                  <path d="M3 9h18M9 9v12" />
                </Icon>
                <svg viewBox="0 0 24 24" width="24" height="24" style={{ display: 'block' }}>
                  <path d="M9 6l2 6 6 2-6 2-2 6-2-6-6-2 6-2z" fill={CORAL} />
                  <path d="M18 1l1.200 3.800L23 6l-3.800 1.200L18 11l-1.200-3.800L13 6l3.800-1.200z" fill="#ff9a1f" />
                </svg>
              </SlideTools>
              <SlideCol>
                <SlideCanvas />
                <AiHint>AI生成内容，仅供参考</AiHint>
              </SlideCol>
            </Stage>
            <Rail>
              <ChatBubble>
                <Icon size={24} w={1.8}>
                  <path d="M12 4h1a8 8 0 0 1 0 16H6a2 2 0 0 1-2-2v-6a8 8 0 0 1 8-8z" />
                  <path d="M9 10h7M9 14h4" />
                </Icon>
              </ChatBubble>
              {railTools.map(([label, icon]) => (
                <RailItem key={label}>
                  {icon}
                  <RailLabel>{label}</RailLabel>
                </RailItem>
              ))}
            </Rail>
          </WorkRow>
          <Bottom />
        </Main>
      </Body>
      <SharePopover />
      <Annotations />
    </Root>
  )
}
